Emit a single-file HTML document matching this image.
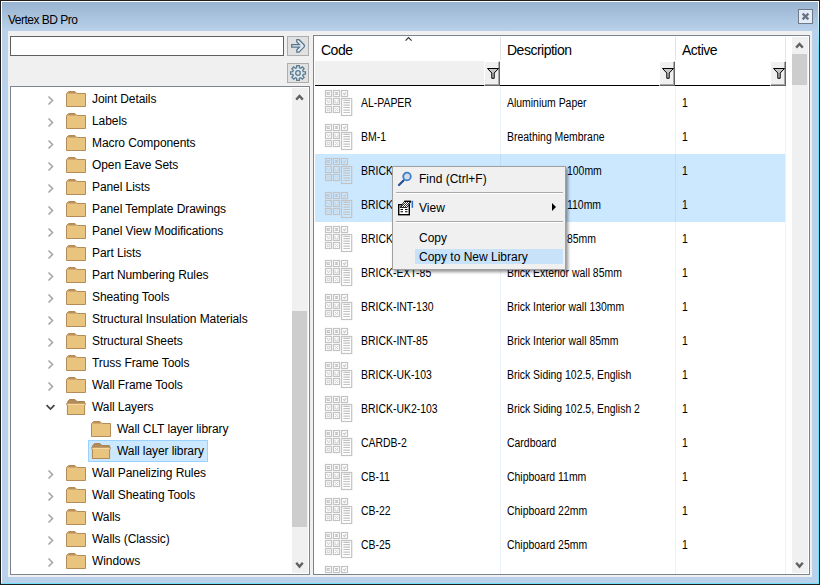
<!DOCTYPE html><html><head><meta charset='utf-8'><style>
*{margin:0;padding:0;box-sizing:border-box}
html,body{width:820px;height:585px;overflow:hidden;background:#1e1e1e;font-family:"Liberation Sans", sans-serif}
.a{position:absolute}
.t{position:absolute;white-space:nowrap;color:#000}
#frame{left:0;top:0;width:820px;height:585px;background:#1e1e1e}
#inner{left:1px;top:1px;width:818px;height:583px;background:#fff}
#blue{left:2px;top:2px;width:816px;height:581px;background:linear-gradient(to bottom,#99b4d1 0px,#b9d1ea 29px,#b9d1ea 100%)}
#client{left:8px;top:31px;width:804px;height:546px;background:#f0f0f0}
.tree .t{font-size:12px;letter-spacing:-0.08px;line-height:22px;height:22px}
.grid .t{font-size:12px;line-height:34px;height:34px;transform:scaleX(0.87);transform-origin:0 0}
.grid .hdr{font-size:14px;letter-spacing:-0.5px;line-height:20px;transform:none}
.menu .t{font-size:12px;line-height:20px}
</style></head><body>
<div id='frame' class='a'></div><div id='inner' class='a'></div><div class='a' style='left:818px;top:1px;width:1px;height:583px;background:linear-gradient(to bottom,#fff 0px,#fff 8px,#70e0fb 45px,#70e0fb 100%)'></div><div class='a' style='left:1px;top:583px;width:818px;height:1px;background:#70e0fb'></div><div id='blue' class='a'></div>
<div class='t' style='left:8px;top:11px;font-size:12px;letter-spacing:-0.5px;line-height:18px;color:#000'>Vertex BD Pro</div>
<div class='a' style='left:798px;top:9px;width:15px;height:15px;border:1px solid #6f7b88;background:#e3edf8'></div>
<svg class='a' style='left:798px;top:9px' width='15' height='15'><path d='M4.6 4.6 L10.4 10.4 M10.4 4.6 L4.6 10.4' stroke='#6a7480' stroke-width='2.3' stroke-linecap='butt'/></svg>
<div id='client' class='a'></div>
<div class='a' style='left:10px;top:36px;width:274px;height:20px;border:1px solid #5f5f5f;background:#fff'></div>
<div class='a' style='left:287px;top:36px;width:22px;height:20px;border:1px solid #adadad;background:#e1e1e1'></div>
<svg class='a' style='left:288px;top:36px' width='22' height='20'><path d='M3.7 8.6 L11.45 8.6 L8.8 5.95 L8.8 3.7 L11.05 3.7 L16.3 8.95 L16.3 10.85 L11.05 16.1 L8.8 16.1 L8.8 13.85 L11.45 11.2 L3.7 11.2 Z' fill='#e2edf5' stroke='#587488' stroke-width='1.25' stroke-linejoin='miter'/></svg>
<div class='a' style='left:287px;top:63px;width:22px;height:20px;border:1px solid #adadad;background:#e1e1e1'></div>
<svg class='a' style='left:287px;top:63px' width='22' height='20'><path d='M16.20 8.56 L18.39 8.73 L18.39 11.27 L16.20 11.44 L15.70 12.66 L17.12 14.33 L15.33 16.12 L13.66 14.70 L12.44 15.20 L12.27 17.39 L9.73 17.39 L9.56 15.20 L8.34 14.70 L6.67 16.12 L4.88 14.33 L6.30 12.66 L5.80 11.44 L3.61 11.27 L3.61 8.73 L5.80 8.56 L6.30 7.34 L4.88 5.67 L6.67 3.88 L8.34 5.30 L9.56 4.80 L9.73 2.61 L12.27 2.61 L12.44 4.80 L13.66 5.30 L15.33 3.88 L17.12 5.67 L15.70 7.34 Z' fill='#dde9f1' stroke='#5d7b8f' stroke-width='1.3'/><circle cx='11' cy='10' r='2.3' fill='#e1e1e1' stroke='#5d7b8f' stroke-width='1.3'/></svg>
<div class='a tree' style='left:10px;top:86px;width:300px;height:489px;border:1px solid #7a8591;background:#fff;overflow:hidden'>
<svg class='a' style='left:35px;top:8px' width='10' height='12'><path d='M2.5 1.5 L6.5 5.5 L2.5 9.5' fill='none' stroke='#a6a6a6' stroke-width='1.6'/></svg>
<svg class='a' style='left:55px;top:4px' width='20' height='16'><path d='M0.5 15.5 V2.5 L2.5 0.5 H9 L11 2.5 H19.5 V15.5 Z' fill='#e8c47e' stroke='#b38c5a' stroke-width='1'/><path d='M1 2.5 L2.8 1 H8.8 L10.3 2.5 Z' fill='#b88e5c'/></svg>
<div class='t' style='left:81px;top:1px'>Joint Details</div>
<svg class='a' style='left:35px;top:30px' width='10' height='12'><path d='M2.5 1.5 L6.5 5.5 L2.5 9.5' fill='none' stroke='#a6a6a6' stroke-width='1.6'/></svg>
<svg class='a' style='left:55px;top:26px' width='20' height='16'><path d='M0.5 15.5 V2.5 L2.5 0.5 H9 L11 2.5 H19.5 V15.5 Z' fill='#e8c47e' stroke='#b38c5a' stroke-width='1'/><path d='M1 2.5 L2.8 1 H8.8 L10.3 2.5 Z' fill='#b88e5c'/></svg>
<div class='t' style='left:81px;top:23px'>Labels</div>
<svg class='a' style='left:35px;top:52px' width='10' height='12'><path d='M2.5 1.5 L6.5 5.5 L2.5 9.5' fill='none' stroke='#a6a6a6' stroke-width='1.6'/></svg>
<svg class='a' style='left:55px;top:48px' width='20' height='16'><path d='M0.5 15.5 V2.5 L2.5 0.5 H9 L11 2.5 H19.5 V15.5 Z' fill='#e8c47e' stroke='#b38c5a' stroke-width='1'/><path d='M1 2.5 L2.8 1 H8.8 L10.3 2.5 Z' fill='#b88e5c'/></svg>
<div class='t' style='left:81px;top:45px'>Macro Components</div>
<svg class='a' style='left:35px;top:74px' width='10' height='12'><path d='M2.5 1.5 L6.5 5.5 L2.5 9.5' fill='none' stroke='#a6a6a6' stroke-width='1.6'/></svg>
<svg class='a' style='left:55px;top:70px' width='20' height='16'><path d='M0.5 15.5 V2.5 L2.5 0.5 H9 L11 2.5 H19.5 V15.5 Z' fill='#e8c47e' stroke='#b38c5a' stroke-width='1'/><path d='M1 2.5 L2.8 1 H8.8 L10.3 2.5 Z' fill='#b88e5c'/></svg>
<div class='t' style='left:81px;top:67px'>Open Eave Sets</div>
<svg class='a' style='left:35px;top:96px' width='10' height='12'><path d='M2.5 1.5 L6.5 5.5 L2.5 9.5' fill='none' stroke='#a6a6a6' stroke-width='1.6'/></svg>
<svg class='a' style='left:55px;top:92px' width='20' height='16'><path d='M0.5 15.5 V2.5 L2.5 0.5 H9 L11 2.5 H19.5 V15.5 Z' fill='#e8c47e' stroke='#b38c5a' stroke-width='1'/><path d='M1 2.5 L2.8 1 H8.8 L10.3 2.5 Z' fill='#b88e5c'/></svg>
<div class='t' style='left:81px;top:89px'>Panel Lists</div>
<svg class='a' style='left:35px;top:118px' width='10' height='12'><path d='M2.5 1.5 L6.5 5.5 L2.5 9.5' fill='none' stroke='#a6a6a6' stroke-width='1.6'/></svg>
<svg class='a' style='left:55px;top:114px' width='20' height='16'><path d='M0.5 15.5 V2.5 L2.5 0.5 H9 L11 2.5 H19.5 V15.5 Z' fill='#e8c47e' stroke='#b38c5a' stroke-width='1'/><path d='M1 2.5 L2.8 1 H8.8 L10.3 2.5 Z' fill='#b88e5c'/></svg>
<div class='t' style='left:81px;top:111px'>Panel Template Drawings</div>
<svg class='a' style='left:35px;top:140px' width='10' height='12'><path d='M2.5 1.5 L6.5 5.5 L2.5 9.5' fill='none' stroke='#a6a6a6' stroke-width='1.6'/></svg>
<svg class='a' style='left:55px;top:136px' width='20' height='16'><path d='M0.5 15.5 V2.5 L2.5 0.5 H9 L11 2.5 H19.5 V15.5 Z' fill='#e8c47e' stroke='#b38c5a' stroke-width='1'/><path d='M1 2.5 L2.8 1 H8.8 L10.3 2.5 Z' fill='#b88e5c'/></svg>
<div class='t' style='left:81px;top:133px'>Panel View Modifications</div>
<svg class='a' style='left:35px;top:162px' width='10' height='12'><path d='M2.5 1.5 L6.5 5.5 L2.5 9.5' fill='none' stroke='#a6a6a6' stroke-width='1.6'/></svg>
<svg class='a' style='left:55px;top:158px' width='20' height='16'><path d='M0.5 15.5 V2.5 L2.5 0.5 H9 L11 2.5 H19.5 V15.5 Z' fill='#e8c47e' stroke='#b38c5a' stroke-width='1'/><path d='M1 2.5 L2.8 1 H8.8 L10.3 2.5 Z' fill='#b88e5c'/></svg>
<div class='t' style='left:81px;top:155px'>Part Lists</div>
<svg class='a' style='left:35px;top:184px' width='10' height='12'><path d='M2.5 1.5 L6.5 5.5 L2.5 9.5' fill='none' stroke='#a6a6a6' stroke-width='1.6'/></svg>
<svg class='a' style='left:55px;top:180px' width='20' height='16'><path d='M0.5 15.5 V2.5 L2.5 0.5 H9 L11 2.5 H19.5 V15.5 Z' fill='#e8c47e' stroke='#b38c5a' stroke-width='1'/><path d='M1 2.5 L2.8 1 H8.8 L10.3 2.5 Z' fill='#b88e5c'/></svg>
<div class='t' style='left:81px;top:177px'>Part Numbering Rules</div>
<svg class='a' style='left:35px;top:206px' width='10' height='12'><path d='M2.5 1.5 L6.5 5.5 L2.5 9.5' fill='none' stroke='#a6a6a6' stroke-width='1.6'/></svg>
<svg class='a' style='left:55px;top:202px' width='20' height='16'><path d='M0.5 15.5 V2.5 L2.5 0.5 H9 L11 2.5 H19.5 V15.5 Z' fill='#e8c47e' stroke='#b38c5a' stroke-width='1'/><path d='M1 2.5 L2.8 1 H8.8 L10.3 2.5 Z' fill='#b88e5c'/></svg>
<div class='t' style='left:81px;top:199px'>Sheating Tools</div>
<svg class='a' style='left:35px;top:228px' width='10' height='12'><path d='M2.5 1.5 L6.5 5.5 L2.5 9.5' fill='none' stroke='#a6a6a6' stroke-width='1.6'/></svg>
<svg class='a' style='left:55px;top:224px' width='20' height='16'><path d='M0.5 15.5 V2.5 L2.5 0.5 H9 L11 2.5 H19.5 V15.5 Z' fill='#e8c47e' stroke='#b38c5a' stroke-width='1'/><path d='M1 2.5 L2.8 1 H8.8 L10.3 2.5 Z' fill='#b88e5c'/></svg>
<div class='t' style='left:81px;top:221px'>Structural Insulation Materials</div>
<svg class='a' style='left:35px;top:250px' width='10' height='12'><path d='M2.5 1.5 L6.5 5.5 L2.5 9.5' fill='none' stroke='#a6a6a6' stroke-width='1.6'/></svg>
<svg class='a' style='left:55px;top:246px' width='20' height='16'><path d='M0.5 15.5 V2.5 L2.5 0.5 H9 L11 2.5 H19.5 V15.5 Z' fill='#e8c47e' stroke='#b38c5a' stroke-width='1'/><path d='M1 2.5 L2.8 1 H8.8 L10.3 2.5 Z' fill='#b88e5c'/></svg>
<div class='t' style='left:81px;top:243px'>Structural Sheets</div>
<svg class='a' style='left:35px;top:272px' width='10' height='12'><path d='M2.5 1.5 L6.5 5.5 L2.5 9.5' fill='none' stroke='#a6a6a6' stroke-width='1.6'/></svg>
<svg class='a' style='left:55px;top:268px' width='20' height='16'><path d='M0.5 15.5 V2.5 L2.5 0.5 H9 L11 2.5 H19.5 V15.5 Z' fill='#e8c47e' stroke='#b38c5a' stroke-width='1'/><path d='M1 2.5 L2.8 1 H8.8 L10.3 2.5 Z' fill='#b88e5c'/></svg>
<div class='t' style='left:81px;top:265px'>Truss Frame Tools</div>
<svg class='a' style='left:35px;top:294px' width='10' height='12'><path d='M2.5 1.5 L6.5 5.5 L2.5 9.5' fill='none' stroke='#a6a6a6' stroke-width='1.6'/></svg>
<svg class='a' style='left:55px;top:290px' width='20' height='16'><path d='M0.5 15.5 V2.5 L2.5 0.5 H9 L11 2.5 H19.5 V15.5 Z' fill='#e8c47e' stroke='#b38c5a' stroke-width='1'/><path d='M1 2.5 L2.8 1 H8.8 L10.3 2.5 Z' fill='#b88e5c'/></svg>
<div class='t' style='left:81px;top:287px'>Wall Frame Tools</div>
<svg class='a' style='left:34px;top:316px' width='12' height='10'><path d='M1.6 2.2 L5.5 6.1 L9.4 2.2' fill='none' stroke='#454545' stroke-width='1.8'/></svg>
<svg class='a' style='left:55px;top:312px' width='20' height='16'><path d='M1.5 3 L3.5 0.5 H9 L11 2.5 H18.5 V15.5 H1.5 Z' fill='#b38b5a' stroke='#aa8452' stroke-width='1'/><path d='M0.5 4.6 H19.5 L18.6 6.8 V15.5 H1.4 V6.8 Z' fill='#e8c47e' stroke='#b08a58' stroke-width='1'/><path d='M1.3 5.3 H18.7' stroke='#fae0aa' stroke-width='1'/></svg>
<div class='t' style='left:81px;top:309px'>Wall Layers</div>
<svg class='a' style='left:80px;top:334px' width='20' height='16'><path d='M0.5 15.5 V2.5 L2.5 0.5 H9 L11 2.5 H19.5 V15.5 Z' fill='#e8c47e' stroke='#b38c5a' stroke-width='1'/><path d='M1 2.5 L2.8 1 H8.8 L10.3 2.5 Z' fill='#b88e5c'/></svg>
<div class='t' style='left:106px;top:331px'>Wall CLT layer library</div>
<div class='a' style='left:77px;top:353px;width:120px;height:22px;border:1px solid #99d1ff;background:#cce8ff'></div>
<svg class='a' style='left:80px;top:356px' width='20' height='16'><path d='M1.5 3 L3.5 0.5 H9 L11 2.5 H18.5 V15.5 H1.5 Z' fill='#b38b5a' stroke='#aa8452' stroke-width='1'/><path d='M0.5 4.6 H19.5 L18.6 6.8 V15.5 H1.4 V6.8 Z' fill='#e8c47e' stroke='#b08a58' stroke-width='1'/><path d='M1.3 5.3 H18.7' stroke='#fae0aa' stroke-width='1'/></svg>
<div class='t' style='left:106px;top:353px'>Wall layer library</div>
<svg class='a' style='left:35px;top:382px' width='10' height='12'><path d='M2.5 1.5 L6.5 5.5 L2.5 9.5' fill='none' stroke='#a6a6a6' stroke-width='1.6'/></svg>
<svg class='a' style='left:55px;top:378px' width='20' height='16'><path d='M0.5 15.5 V2.5 L2.5 0.5 H9 L11 2.5 H19.5 V15.5 Z' fill='#e8c47e' stroke='#b38c5a' stroke-width='1'/><path d='M1 2.5 L2.8 1 H8.8 L10.3 2.5 Z' fill='#b88e5c'/></svg>
<div class='t' style='left:81px;top:375px'>Wall Panelizing Rules</div>
<svg class='a' style='left:35px;top:404px' width='10' height='12'><path d='M2.5 1.5 L6.5 5.5 L2.5 9.5' fill='none' stroke='#a6a6a6' stroke-width='1.6'/></svg>
<svg class='a' style='left:55px;top:400px' width='20' height='16'><path d='M0.5 15.5 V2.5 L2.5 0.5 H9 L11 2.5 H19.5 V15.5 Z' fill='#e8c47e' stroke='#b38c5a' stroke-width='1'/><path d='M1 2.5 L2.8 1 H8.8 L10.3 2.5 Z' fill='#b88e5c'/></svg>
<div class='t' style='left:81px;top:397px'>Wall Sheating Tools</div>
<svg class='a' style='left:35px;top:426px' width='10' height='12'><path d='M2.5 1.5 L6.5 5.5 L2.5 9.5' fill='none' stroke='#a6a6a6' stroke-width='1.6'/></svg>
<svg class='a' style='left:55px;top:422px' width='20' height='16'><path d='M0.5 15.5 V2.5 L2.5 0.5 H9 L11 2.5 H19.5 V15.5 Z' fill='#e8c47e' stroke='#b38c5a' stroke-width='1'/><path d='M1 2.5 L2.8 1 H8.8 L10.3 2.5 Z' fill='#b88e5c'/></svg>
<div class='t' style='left:81px;top:419px'>Walls</div>
<svg class='a' style='left:35px;top:448px' width='10' height='12'><path d='M2.5 1.5 L6.5 5.5 L2.5 9.5' fill='none' stroke='#a6a6a6' stroke-width='1.6'/></svg>
<svg class='a' style='left:55px;top:444px' width='20' height='16'><path d='M0.5 15.5 V2.5 L2.5 0.5 H9 L11 2.5 H19.5 V15.5 Z' fill='#e8c47e' stroke='#b38c5a' stroke-width='1'/><path d='M1 2.5 L2.8 1 H8.8 L10.3 2.5 Z' fill='#b88e5c'/></svg>
<div class='t' style='left:81px;top:441px'>Walls (Classic)</div>
<svg class='a' style='left:35px;top:470px' width='10' height='12'><path d='M2.5 1.5 L6.5 5.5 L2.5 9.5' fill='none' stroke='#a6a6a6' stroke-width='1.6'/></svg>
<svg class='a' style='left:55px;top:466px' width='20' height='16'><path d='M0.5 15.5 V2.5 L2.5 0.5 H9 L11 2.5 H19.5 V15.5 Z' fill='#e8c47e' stroke='#b38c5a' stroke-width='1'/><path d='M1 2.5 L2.8 1 H8.8 L10.3 2.5 Z' fill='#b88e5c'/></svg>
<div class='t' style='left:81px;top:463px'>Windows</div>
<div class='a' style='left:281px;top:1px;width:16px;height:485px;background:#f0f0f0'></div>
<div class='a' style='left:281px;top:224px;width:15px;height:216px;background:#cdcdcd'></div>
<svg class='a' style='left:281px;top:1px' width='16' height='17'><path d='M4.2 11.6 L7.5 8.0 L10.8 11.6' fill='none' stroke='#606060' stroke-width='2.3'/></svg>
<svg class='a' style='left:281px;top:469px' width='16' height='17'><path d='M4.2 6.7 L7.5 10.6 L10.8 6.7' fill='none' stroke='#606060' stroke-width='2.3'/></svg>
</div>
<div class='a grid' style='left:313px;top:35px;width:497px;height:540px;border:1px solid #7a8591;background:#fff;overflow:hidden'>
<div class='a' style='left:186px;top:1px;width:1px;height:23px;background:#e3e3e3'></div>
<div class='a' style='left:186px;top:50px;width:1px;height:500px;background:#e9f2fb'></div>
<div class='a' style='left:361px;top:1px;width:1px;height:23px;background:#e3e3e3'></div>
<div class='a' style='left:361px;top:50px;width:1px;height:500px;background:#e9f2fb'></div>
<div class='a' style='left:471px;top:1px;width:1px;height:23px;background:#e3e3e3'></div>
<div class='a' style='left:471px;top:50px;width:1px;height:500px;background:#e9f2fb'></div>
<div class='a' style='left:1px;top:25px;width:169px;height:24px;background:#f0f0f0'></div>
<div class='a' style='left:1px;top:49px;width:470px;height:1px;background:#000'></div>
<div class='a' style='left:170px;top:25px;width:16px;height:25px;background:#f0f0f0;border-top:1px solid #fff;border-left:1px solid #fff;border-right:1px solid #646464;border-bottom:1px solid #646464;box-shadow:inset -1px -1px 0 #a8a8a8'></div>
<svg class='a' style='left:170px;top:25px' width='16' height='25'><path d='M3.5 7.5 H14.5 L10.2 12 V17.3 H7.8 V12 Z' fill='#c4c4c4' stroke='#000' stroke-width='1'/></svg>
<div class='a' style='left:345px;top:25px;width:16px;height:25px;background:#f0f0f0;border-top:1px solid #fff;border-left:1px solid #fff;border-right:1px solid #646464;border-bottom:1px solid #646464;box-shadow:inset -1px -1px 0 #a8a8a8'></div>
<svg class='a' style='left:345px;top:25px' width='16' height='25'><path d='M3.5 7.5 H14.5 L10.2 12 V17.3 H7.8 V12 Z' fill='#c4c4c4' stroke='#000' stroke-width='1'/></svg>
<div class='a' style='left:456px;top:25px;width:16px;height:25px;background:#f0f0f0;border-top:1px solid #fff;border-left:1px solid #fff;border-right:1px solid #646464;border-bottom:1px solid #646464;box-shadow:inset -1px -1px 0 #a8a8a8'></div>
<svg class='a' style='left:456px;top:25px' width='16' height='25'><path d='M3.5 7.5 H14.5 L10.2 12 V17.3 H7.8 V12 Z' fill='#c4c4c4' stroke='#000' stroke-width='1'/></svg>
<svg class='a' style='left:88px;top:0px' width='12' height='8'><path d='M3.6 4.6 L6.5 1.6 L9.6 4.6' fill='none' stroke='#333' stroke-width='1.2'/></svg>
<div class='t hdr' style='left:7px;top:4px'>Code</div>
<div class='t hdr' style='left:193px;top:4px'>Description</div>
<div class='t hdr' style='left:368px;top:4px'>Active</div>
<svg class='a' style='left:8px;top:52px' width='32' height='32'><g fill='none' stroke='#c3c3c3' stroke-width='1.2'>
<rect x='3.5' y='2.5' width='6' height='6'/><rect x='11.5' y='2.5' width='6' height='6'/><rect x='19.5' y='2.5' width='6' height='6'/>
<rect x='3.5' y='10.5' width='6' height='6'/><rect x='11.5' y='10.5' width='6' height='6'/>
<rect x='3.5' y='18.5' width='6' height='6'/><rect x='11.5' y='18.5' width='6' height='6'/>
<rect x='19.5' y='10.5' width='10.2' height='17'/>
<path d='M21.3 12.4 H28 M21.3 14.6 H28 M21.3 17.2 H28 M21.3 19.5 H28 M21.3 22.2 H28 M21.3 24.5 H28'/>
<path d='M8 4.6 H5.2 V6.4 H8 M13 4.6 H16 M14.5 4.6 V6.4 M13 6.4 H16 M21.2 5.2 L22.5 6.6 L24 4.2' stroke='#c6c6c6'/>
<path d='M5 12 L6.5 15 L8 12 M13 12 V15 H16 V12 M5.2 20.3 H7.8 V22.7 H5.2 Z M13 20 L16 23 M16 20 L13 23' stroke='#cfcfcf' stroke-width='1'/>
</g></svg>
<div class='t' style='left:47px;top:50px'>AL-PAPER</div>
<div class='t' style='left:193px;top:50px'>Aluminium Paper</div>
<div class='t' style='left:368px;top:50px'>1</div>
<svg class='a' style='left:8px;top:86px' width='32' height='32'><g fill='none' stroke='#c3c3c3' stroke-width='1.2'>
<rect x='3.5' y='2.5' width='6' height='6'/><rect x='11.5' y='2.5' width='6' height='6'/><rect x='19.5' y='2.5' width='6' height='6'/>
<rect x='3.5' y='10.5' width='6' height='6'/><rect x='11.5' y='10.5' width='6' height='6'/>
<rect x='3.5' y='18.5' width='6' height='6'/><rect x='11.5' y='18.5' width='6' height='6'/>
<rect x='19.5' y='10.5' width='10.2' height='17'/>
<path d='M21.3 12.4 H28 M21.3 14.6 H28 M21.3 17.2 H28 M21.3 19.5 H28 M21.3 22.2 H28 M21.3 24.5 H28'/>
<path d='M8 4.6 H5.2 V6.4 H8 M13 4.6 H16 M14.5 4.6 V6.4 M13 6.4 H16 M21.2 5.2 L22.5 6.6 L24 4.2' stroke='#c6c6c6'/>
<path d='M5 12 L6.5 15 L8 12 M13 12 V15 H16 V12 M5.2 20.3 H7.8 V22.7 H5.2 Z M13 20 L16 23 M16 20 L13 23' stroke='#cfcfcf' stroke-width='1'/>
</g></svg>
<div class='t' style='left:47px;top:84px'>BM-1</div>
<div class='t' style='left:193px;top:84px'>Breathing Membrane</div>
<div class='t' style='left:368px;top:84px'>1</div>
<div class='a' style='left:1px;top:118px;width:470px;height:34px;background:#cce8ff'></div>
<div class='a' style='left:186px;top:118px;width:1px;height:34px;background:#c0dcf6'></div>
<div class='a' style='left:361px;top:118px;width:1px;height:34px;background:#c0dcf6'></div>
<svg class='a' style='left:8px;top:120px' width='32' height='32'><g fill='none' stroke='#c3c3c3' stroke-width='1.2'>
<rect x='3.5' y='2.5' width='6' height='6'/><rect x='11.5' y='2.5' width='6' height='6'/><rect x='19.5' y='2.5' width='6' height='6'/>
<rect x='3.5' y='10.5' width='6' height='6'/><rect x='11.5' y='10.5' width='6' height='6'/>
<rect x='3.5' y='18.5' width='6' height='6'/><rect x='11.5' y='18.5' width='6' height='6'/>
<rect x='19.5' y='10.5' width='10.2' height='17'/>
<path d='M21.3 12.4 H28 M21.3 14.6 H28 M21.3 17.2 H28 M21.3 19.5 H28 M21.3 22.2 H28 M21.3 24.5 H28'/>
<path d='M8 4.6 H5.2 V6.4 H8 M13 4.6 H16 M14.5 4.6 V6.4 M13 6.4 H16 M21.2 5.2 L22.5 6.6 L24 4.2' stroke='#c6c6c6'/>
<path d='M5 12 L6.5 15 L8 12 M13 12 V15 H16 V12 M5.2 20.3 H7.8 V22.7 H5.2 Z M13 20 L16 23 M16 20 L13 23' stroke='#cfcfcf' stroke-width='1'/>
</g></svg>
<div class='t' style='left:47px;top:118px'>BRICK-EXT-100</div>
<div class='t' style='left:253px;top:118px'>100mm</div>
<div class='t' style='left:193px;top:118px'>Brick</div>
<div class='t' style='left:368px;top:118px'>1</div>
<div class='a' style='left:1px;top:152px;width:470px;height:34px;background:#cce8ff'></div>
<div class='a' style='left:186px;top:152px;width:1px;height:34px;background:#c0dcf6'></div>
<div class='a' style='left:361px;top:152px;width:1px;height:34px;background:#c0dcf6'></div>
<svg class='a' style='left:8px;top:154px' width='32' height='32'><g fill='none' stroke='#c3c3c3' stroke-width='1.2'>
<rect x='3.5' y='2.5' width='6' height='6'/><rect x='11.5' y='2.5' width='6' height='6'/><rect x='19.5' y='2.5' width='6' height='6'/>
<rect x='3.5' y='10.5' width='6' height='6'/><rect x='11.5' y='10.5' width='6' height='6'/>
<rect x='3.5' y='18.5' width='6' height='6'/><rect x='11.5' y='18.5' width='6' height='6'/>
<rect x='19.5' y='10.5' width='10.2' height='17'/>
<path d='M21.3 12.4 H28 M21.3 14.6 H28 M21.3 17.2 H28 M21.3 19.5 H28 M21.3 22.2 H28 M21.3 24.5 H28'/>
<path d='M8 4.6 H5.2 V6.4 H8 M13 4.6 H16 M14.5 4.6 V6.4 M13 6.4 H16 M21.2 5.2 L22.5 6.6 L24 4.2' stroke='#c6c6c6'/>
<path d='M5 12 L6.5 15 L8 12 M13 12 V15 H16 V12 M5.2 20.3 H7.8 V22.7 H5.2 Z M13 20 L16 23 M16 20 L13 23' stroke='#cfcfcf' stroke-width='1'/>
</g></svg>
<div class='t' style='left:47px;top:152px'>BRICK-EXT-110</div>
<div class='t' style='left:253px;top:152px'>110mm</div>
<div class='t' style='left:193px;top:152px'>Brick</div>
<div class='t' style='left:368px;top:152px'>1</div>
<svg class='a' style='left:8px;top:188px' width='32' height='32'><g fill='none' stroke='#c3c3c3' stroke-width='1.2'>
<rect x='3.5' y='2.5' width='6' height='6'/><rect x='11.5' y='2.5' width='6' height='6'/><rect x='19.5' y='2.5' width='6' height='6'/>
<rect x='3.5' y='10.5' width='6' height='6'/><rect x='11.5' y='10.5' width='6' height='6'/>
<rect x='3.5' y='18.5' width='6' height='6'/><rect x='11.5' y='18.5' width='6' height='6'/>
<rect x='19.5' y='10.5' width='10.2' height='17'/>
<path d='M21.3 12.4 H28 M21.3 14.6 H28 M21.3 17.2 H28 M21.3 19.5 H28 M21.3 22.2 H28 M21.3 24.5 H28'/>
<path d='M8 4.6 H5.2 V6.4 H8 M13 4.6 H16 M14.5 4.6 V6.4 M13 6.4 H16 M21.2 5.2 L22.5 6.6 L24 4.2' stroke='#c6c6c6'/>
<path d='M5 12 L6.5 15 L8 12 M13 12 V15 H16 V12 M5.2 20.3 H7.8 V22.7 H5.2 Z M13 20 L16 23 M16 20 L13 23' stroke='#cfcfcf' stroke-width='1'/>
</g></svg>
<div class='t' style='left:47px;top:186px'>BRICK-EXT-85B</div>
<div class='t' style='left:253px;top:186px'>85mm</div>
<div class='t' style='left:193px;top:186px'>Brick</div>
<div class='t' style='left:368px;top:186px'>1</div>
<svg class='a' style='left:8px;top:222px' width='32' height='32'><g fill='none' stroke='#c3c3c3' stroke-width='1.2'>
<rect x='3.5' y='2.5' width='6' height='6'/><rect x='11.5' y='2.5' width='6' height='6'/><rect x='19.5' y='2.5' width='6' height='6'/>
<rect x='3.5' y='10.5' width='6' height='6'/><rect x='11.5' y='10.5' width='6' height='6'/>
<rect x='3.5' y='18.5' width='6' height='6'/><rect x='11.5' y='18.5' width='6' height='6'/>
<rect x='19.5' y='10.5' width='10.2' height='17'/>
<path d='M21.3 12.4 H28 M21.3 14.6 H28 M21.3 17.2 H28 M21.3 19.5 H28 M21.3 22.2 H28 M21.3 24.5 H28'/>
<path d='M8 4.6 H5.2 V6.4 H8 M13 4.6 H16 M14.5 4.6 V6.4 M13 6.4 H16 M21.2 5.2 L22.5 6.6 L24 4.2' stroke='#c6c6c6'/>
<path d='M5 12 L6.5 15 L8 12 M13 12 V15 H16 V12 M5.2 20.3 H7.8 V22.7 H5.2 Z M13 20 L16 23 M16 20 L13 23' stroke='#cfcfcf' stroke-width='1'/>
</g></svg>
<div class='t' style='left:47px;top:220px'>BRICK-EXT-85</div>
<div class='t' style='left:193px;top:220px'>Brick Exterior wall 85mm</div>
<div class='t' style='left:368px;top:220px'>1</div>
<svg class='a' style='left:8px;top:256px' width='32' height='32'><g fill='none' stroke='#c3c3c3' stroke-width='1.2'>
<rect x='3.5' y='2.5' width='6' height='6'/><rect x='11.5' y='2.5' width='6' height='6'/><rect x='19.5' y='2.5' width='6' height='6'/>
<rect x='3.5' y='10.5' width='6' height='6'/><rect x='11.5' y='10.5' width='6' height='6'/>
<rect x='3.5' y='18.5' width='6' height='6'/><rect x='11.5' y='18.5' width='6' height='6'/>
<rect x='19.5' y='10.5' width='10.2' height='17'/>
<path d='M21.3 12.4 H28 M21.3 14.6 H28 M21.3 17.2 H28 M21.3 19.5 H28 M21.3 22.2 H28 M21.3 24.5 H28'/>
<path d='M8 4.6 H5.2 V6.4 H8 M13 4.6 H16 M14.5 4.6 V6.4 M13 6.4 H16 M21.2 5.2 L22.5 6.6 L24 4.2' stroke='#c6c6c6'/>
<path d='M5 12 L6.5 15 L8 12 M13 12 V15 H16 V12 M5.2 20.3 H7.8 V22.7 H5.2 Z M13 20 L16 23 M16 20 L13 23' stroke='#cfcfcf' stroke-width='1'/>
</g></svg>
<div class='t' style='left:47px;top:254px'>BRICK-INT-130</div>
<div class='t' style='left:193px;top:254px'>Brick Interior wall 130mm</div>
<div class='t' style='left:368px;top:254px'>1</div>
<svg class='a' style='left:8px;top:290px' width='32' height='32'><g fill='none' stroke='#c3c3c3' stroke-width='1.2'>
<rect x='3.5' y='2.5' width='6' height='6'/><rect x='11.5' y='2.5' width='6' height='6'/><rect x='19.5' y='2.5' width='6' height='6'/>
<rect x='3.5' y='10.5' width='6' height='6'/><rect x='11.5' y='10.5' width='6' height='6'/>
<rect x='3.5' y='18.5' width='6' height='6'/><rect x='11.5' y='18.5' width='6' height='6'/>
<rect x='19.5' y='10.5' width='10.2' height='17'/>
<path d='M21.3 12.4 H28 M21.3 14.6 H28 M21.3 17.2 H28 M21.3 19.5 H28 M21.3 22.2 H28 M21.3 24.5 H28'/>
<path d='M8 4.6 H5.2 V6.4 H8 M13 4.6 H16 M14.5 4.6 V6.4 M13 6.4 H16 M21.2 5.2 L22.5 6.6 L24 4.2' stroke='#c6c6c6'/>
<path d='M5 12 L6.5 15 L8 12 M13 12 V15 H16 V12 M5.2 20.3 H7.8 V22.7 H5.2 Z M13 20 L16 23 M16 20 L13 23' stroke='#cfcfcf' stroke-width='1'/>
</g></svg>
<div class='t' style='left:47px;top:288px'>BRICK-INT-85</div>
<div class='t' style='left:193px;top:288px'>Brick Interior wall 85mm</div>
<div class='t' style='left:368px;top:288px'>1</div>
<svg class='a' style='left:8px;top:324px' width='32' height='32'><g fill='none' stroke='#c3c3c3' stroke-width='1.2'>
<rect x='3.5' y='2.5' width='6' height='6'/><rect x='11.5' y='2.5' width='6' height='6'/><rect x='19.5' y='2.5' width='6' height='6'/>
<rect x='3.5' y='10.5' width='6' height='6'/><rect x='11.5' y='10.5' width='6' height='6'/>
<rect x='3.5' y='18.5' width='6' height='6'/><rect x='11.5' y='18.5' width='6' height='6'/>
<rect x='19.5' y='10.5' width='10.2' height='17'/>
<path d='M21.3 12.4 H28 M21.3 14.6 H28 M21.3 17.2 H28 M21.3 19.5 H28 M21.3 22.2 H28 M21.3 24.5 H28'/>
<path d='M8 4.6 H5.2 V6.4 H8 M13 4.6 H16 M14.5 4.6 V6.4 M13 6.4 H16 M21.2 5.2 L22.5 6.6 L24 4.2' stroke='#c6c6c6'/>
<path d='M5 12 L6.5 15 L8 12 M13 12 V15 H16 V12 M5.2 20.3 H7.8 V22.7 H5.2 Z M13 20 L16 23 M16 20 L13 23' stroke='#cfcfcf' stroke-width='1'/>
</g></svg>
<div class='t' style='left:47px;top:322px'>BRICK-UK-103</div>
<div class='t' style='left:193px;top:322px'>Brick Siding 102.5, English</div>
<div class='t' style='left:368px;top:322px'>1</div>
<svg class='a' style='left:8px;top:358px' width='32' height='32'><g fill='none' stroke='#c3c3c3' stroke-width='1.2'>
<rect x='3.5' y='2.5' width='6' height='6'/><rect x='11.5' y='2.5' width='6' height='6'/><rect x='19.5' y='2.5' width='6' height='6'/>
<rect x='3.5' y='10.5' width='6' height='6'/><rect x='11.5' y='10.5' width='6' height='6'/>
<rect x='3.5' y='18.5' width='6' height='6'/><rect x='11.5' y='18.5' width='6' height='6'/>
<rect x='19.5' y='10.5' width='10.2' height='17'/>
<path d='M21.3 12.4 H28 M21.3 14.6 H28 M21.3 17.2 H28 M21.3 19.5 H28 M21.3 22.2 H28 M21.3 24.5 H28'/>
<path d='M8 4.6 H5.2 V6.4 H8 M13 4.6 H16 M14.5 4.6 V6.4 M13 6.4 H16 M21.2 5.2 L22.5 6.6 L24 4.2' stroke='#c6c6c6'/>
<path d='M5 12 L6.5 15 L8 12 M13 12 V15 H16 V12 M5.2 20.3 H7.8 V22.7 H5.2 Z M13 20 L16 23 M16 20 L13 23' stroke='#cfcfcf' stroke-width='1'/>
</g></svg>
<div class='t' style='left:47px;top:356px'>BRICK-UK2-103</div>
<div class='t' style='left:193px;top:356px'>Brick Siding 102.5, English 2</div>
<div class='t' style='left:368px;top:356px'>1</div>
<svg class='a' style='left:8px;top:392px' width='32' height='32'><g fill='none' stroke='#c3c3c3' stroke-width='1.2'>
<rect x='3.5' y='2.5' width='6' height='6'/><rect x='11.5' y='2.5' width='6' height='6'/><rect x='19.5' y='2.5' width='6' height='6'/>
<rect x='3.5' y='10.5' width='6' height='6'/><rect x='11.5' y='10.5' width='6' height='6'/>
<rect x='3.5' y='18.5' width='6' height='6'/><rect x='11.5' y='18.5' width='6' height='6'/>
<rect x='19.5' y='10.5' width='10.2' height='17'/>
<path d='M21.3 12.4 H28 M21.3 14.6 H28 M21.3 17.2 H28 M21.3 19.5 H28 M21.3 22.2 H28 M21.3 24.5 H28'/>
<path d='M8 4.6 H5.2 V6.4 H8 M13 4.6 H16 M14.5 4.6 V6.4 M13 6.4 H16 M21.2 5.2 L22.5 6.6 L24 4.2' stroke='#c6c6c6'/>
<path d='M5 12 L6.5 15 L8 12 M13 12 V15 H16 V12 M5.2 20.3 H7.8 V22.7 H5.2 Z M13 20 L16 23 M16 20 L13 23' stroke='#cfcfcf' stroke-width='1'/>
</g></svg>
<div class='t' style='left:47px;top:390px'>CARDB-2</div>
<div class='t' style='left:193px;top:390px'>Cardboard</div>
<div class='t' style='left:368px;top:390px'>1</div>
<svg class='a' style='left:8px;top:426px' width='32' height='32'><g fill='none' stroke='#c3c3c3' stroke-width='1.2'>
<rect x='3.5' y='2.5' width='6' height='6'/><rect x='11.5' y='2.5' width='6' height='6'/><rect x='19.5' y='2.5' width='6' height='6'/>
<rect x='3.5' y='10.5' width='6' height='6'/><rect x='11.5' y='10.5' width='6' height='6'/>
<rect x='3.5' y='18.5' width='6' height='6'/><rect x='11.5' y='18.5' width='6' height='6'/>
<rect x='19.5' y='10.5' width='10.2' height='17'/>
<path d='M21.3 12.4 H28 M21.3 14.6 H28 M21.3 17.2 H28 M21.3 19.5 H28 M21.3 22.2 H28 M21.3 24.5 H28'/>
<path d='M8 4.6 H5.2 V6.4 H8 M13 4.6 H16 M14.5 4.6 V6.4 M13 6.4 H16 M21.2 5.2 L22.5 6.6 L24 4.2' stroke='#c6c6c6'/>
<path d='M5 12 L6.5 15 L8 12 M13 12 V15 H16 V12 M5.2 20.3 H7.8 V22.7 H5.2 Z M13 20 L16 23 M16 20 L13 23' stroke='#cfcfcf' stroke-width='1'/>
</g></svg>
<div class='t' style='left:47px;top:424px'>CB-11</div>
<div class='t' style='left:193px;top:424px'>Chipboard 11mm</div>
<div class='t' style='left:368px;top:424px'>1</div>
<svg class='a' style='left:8px;top:460px' width='32' height='32'><g fill='none' stroke='#c3c3c3' stroke-width='1.2'>
<rect x='3.5' y='2.5' width='6' height='6'/><rect x='11.5' y='2.5' width='6' height='6'/><rect x='19.5' y='2.5' width='6' height='6'/>
<rect x='3.5' y='10.5' width='6' height='6'/><rect x='11.5' y='10.5' width='6' height='6'/>
<rect x='3.5' y='18.5' width='6' height='6'/><rect x='11.5' y='18.5' width='6' height='6'/>
<rect x='19.5' y='10.5' width='10.2' height='17'/>
<path d='M21.3 12.4 H28 M21.3 14.6 H28 M21.3 17.2 H28 M21.3 19.5 H28 M21.3 22.2 H28 M21.3 24.5 H28'/>
<path d='M8 4.6 H5.2 V6.4 H8 M13 4.6 H16 M14.5 4.6 V6.4 M13 6.4 H16 M21.2 5.2 L22.5 6.6 L24 4.2' stroke='#c6c6c6'/>
<path d='M5 12 L6.5 15 L8 12 M13 12 V15 H16 V12 M5.2 20.3 H7.8 V22.7 H5.2 Z M13 20 L16 23 M16 20 L13 23' stroke='#cfcfcf' stroke-width='1'/>
</g></svg>
<div class='t' style='left:47px;top:458px'>CB-22</div>
<div class='t' style='left:193px;top:458px'>Chipboard 22mm</div>
<div class='t' style='left:368px;top:458px'>1</div>
<svg class='a' style='left:8px;top:494px' width='32' height='32'><g fill='none' stroke='#c3c3c3' stroke-width='1.2'>
<rect x='3.5' y='2.5' width='6' height='6'/><rect x='11.5' y='2.5' width='6' height='6'/><rect x='19.5' y='2.5' width='6' height='6'/>
<rect x='3.5' y='10.5' width='6' height='6'/><rect x='11.5' y='10.5' width='6' height='6'/>
<rect x='3.5' y='18.5' width='6' height='6'/><rect x='11.5' y='18.5' width='6' height='6'/>
<rect x='19.5' y='10.5' width='10.2' height='17'/>
<path d='M21.3 12.4 H28 M21.3 14.6 H28 M21.3 17.2 H28 M21.3 19.5 H28 M21.3 22.2 H28 M21.3 24.5 H28'/>
<path d='M8 4.6 H5.2 V6.4 H8 M13 4.6 H16 M14.5 4.6 V6.4 M13 6.4 H16 M21.2 5.2 L22.5 6.6 L24 4.2' stroke='#c6c6c6'/>
<path d='M5 12 L6.5 15 L8 12 M13 12 V15 H16 V12 M5.2 20.3 H7.8 V22.7 H5.2 Z M13 20 L16 23 M16 20 L13 23' stroke='#cfcfcf' stroke-width='1'/>
</g></svg>
<div class='t' style='left:47px;top:492px'>CB-25</div>
<div class='t' style='left:193px;top:492px'>Chipboard 25mm</div>
<div class='t' style='left:368px;top:492px'>1</div>
<svg class='a' style='left:8px;top:528px' width='32' height='32'><g fill='none' stroke='#c3c3c3' stroke-width='1.2'>
<rect x='3.5' y='2.5' width='6' height='6'/><rect x='11.5' y='2.5' width='6' height='6'/><rect x='19.5' y='2.5' width='6' height='6'/>
<rect x='3.5' y='10.5' width='6' height='6'/><rect x='11.5' y='10.5' width='6' height='6'/>
<rect x='3.5' y='18.5' width='6' height='6'/><rect x='11.5' y='18.5' width='6' height='6'/>
<rect x='19.5' y='10.5' width='10.2' height='17'/>
<path d='M21.3 12.4 H28 M21.3 14.6 H28 M21.3 17.2 H28 M21.3 19.5 H28 M21.3 22.2 H28 M21.3 24.5 H28'/>
<path d='M8 4.6 H5.2 V6.4 H8 M13 4.6 H16 M14.5 4.6 V6.4 M13 6.4 H16 M21.2 5.2 L22.5 6.6 L24 4.2' stroke='#c6c6c6'/>
<path d='M5 12 L6.5 15 L8 12 M13 12 V15 H16 V12 M5.2 20.3 H7.8 V22.7 H5.2 Z M13 20 L16 23 M16 20 L13 23' stroke='#cfcfcf' stroke-width='1'/>
</g></svg>
<div class='t' style='left:47px;top:526px'>CB-30</div>
<div class='t' style='left:193px;top:526px'>Chipboard 30mm</div>
<div class='t' style='left:368px;top:526px'>1</div>
<div class='a' style='left:478px;top:1px;width:16px;height:536px;background:#f0f0f0'></div>
<div class='a' style='left:478px;top:18px;width:15px;height:31px;background:#cdcdcd'></div>
<svg class='a' style='left:478px;top:1px' width='16' height='17'><path d='M4.2 10.6 L7.5 7.0 L10.8 10.6' fill='none' stroke='#606060' stroke-width='2.3'/></svg>
<svg class='a' style='left:478px;top:520px' width='16' height='17'><path d='M4.2 6.7 L7.5 10.6 L10.8 6.7' fill='none' stroke='#606060' stroke-width='2.3'/></svg>
</div>
<div class='a menu' style='left:392px;top:166px;width:174px;height:104px;border:1px solid #a0a0a0;background:#f0f0f0;box-shadow:2px 2px 3px rgba(0,0,0,0.42)'>
<svg class='a' style='left:3px;top:2px' width='18' height='18'><path d='M3 16 L7.5 11.5' stroke='#1f4f9a' stroke-width='2.2' stroke-linecap='round'/><circle cx='11' cy='7.5' r='3.8' fill='#d6dde6' stroke='#3a7fcf' stroke-width='1.8'/></svg>
<div class='t' style='left:26px;top:2px'>Find (Ctrl+F)</div>
<div class='a' style='left:3px;top:25px;width:167px;height:1px;background:#a9a9a9'></div>
<div class='a' style='left:3px;top:26px;width:167px;height:1px;background:#fff'></div>
<svg class='a' style='left:3px;top:32px' width='20' height='18'><defs><pattern id='chk' width='2' height='2' patternUnits='userSpaceOnUse'><rect width='2' height='2' fill='#fff'/><rect width='1' height='1' fill='#333'/><rect x='1' y='1' width='1' height='1' fill='#333'/></pattern></defs><rect x='2.7' y='5.7' width='10.6' height='10' fill='#fff' stroke='#000' stroke-width='1.4'/><path d='M4.5 10.5 H7 M9 10.5 H11.5 M4.5 12.8 H7 M9 12.8 H11.5' stroke='#000' stroke-width='1.1'/><path d='M4 8.5 L8.3 2.5 H15 L11 8.5 Z' fill='url(#chk)' stroke='#000' stroke-width='0.8'/><path d='M8.3 2.3 H15' stroke='#000' stroke-width='1.4'/><rect x='15.6' y='1.8' width='1.5' height='7' fill='#2a6fd0'/></svg>
<div class='t' style='left:26px;top:31px'>View</div>
<svg class='a' style='left:157px;top:35px' width='8' height='10'><path d='M2 1 L6 5 L2 9 Z' fill='#000'/></svg>
<div class='a' style='left:3px;top:54px;width:167px;height:1px;background:#a9a9a9'></div>
<div class='a' style='left:3px;top:55px;width:167px;height:1px;background:#fff'></div>
<div class='t' style='left:26px;top:61px'>Copy</div>
<div class='a' style='left:22px;top:82px;width:148px;height:15px;background:#c8e2fa'></div>
<div class='t' style='left:26px;top:80px'>Copy to New Library</div>
</div>
</body></html>
